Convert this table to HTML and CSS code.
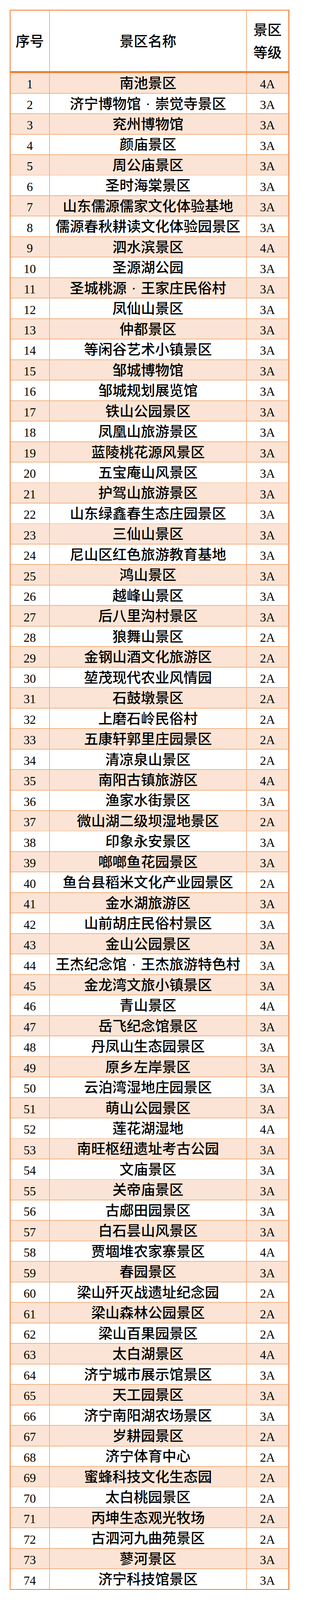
FILE: index.html
```html
<!DOCTYPE html>
<html lang="zh-CN">
<head>
<meta charset="utf-8">
<title>景区名录</title>
<link rel="stylesheet" href="styles.css">
</head>
<body>
<div class="sheet">
  <div class="table">
    <div class="row head">
      <div class="cell">序号</div>
      <div class="cell">景区名称</div>
      <div class="cell grade-head">景区<br>等级</div>
    </div>
    <div class="rule"></div>
    <div class="body">
      <div class="row"><div class="cell num">1</div><div class="cell name">南池景区</div><div class="cell grade">4A</div></div>
      <div class="row"><div class="cell num">2</div><div class="cell name">济宁博物馆<span class="dot">·</span>崇觉寺景区</div><div class="cell grade">3A</div></div>
      <div class="row"><div class="cell num">3</div><div class="cell name">兖州博物馆</div><div class="cell grade">3A</div></div>
      <div class="row"><div class="cell num">4</div><div class="cell name">颜庙景区</div><div class="cell grade">3A</div></div>
      <div class="row"><div class="cell num">5</div><div class="cell name">周公庙景区</div><div class="cell grade">3A</div></div>
      <div class="row"><div class="cell num">6</div><div class="cell name">圣时海棠景区</div><div class="cell grade">3A</div></div>
      <div class="row"><div class="cell num">7</div><div class="cell name">山东儒源儒家文化体验基地</div><div class="cell grade">3A</div></div>
      <div class="row"><div class="cell num">8</div><div class="cell name">儒源春秋耕读文化体验园景区</div><div class="cell grade">3A</div></div>
      <div class="row"><div class="cell num">9</div><div class="cell name">泗水滨景区</div><div class="cell grade">4A</div></div>
      <div class="row"><div class="cell num">10</div><div class="cell name">圣源湖公园</div><div class="cell grade">3A</div></div>
      <div class="row"><div class="cell num">11</div><div class="cell name">圣城桃源<span class="dot">·</span>王家庄民俗村</div><div class="cell grade">3A</div></div>
      <div class="row"><div class="cell num">12</div><div class="cell name">凤仙山景区</div><div class="cell grade">3A</div></div>
      <div class="row"><div class="cell num">13</div><div class="cell name">仲都景区</div><div class="cell grade">3A</div></div>
      <div class="row"><div class="cell num">14</div><div class="cell name">等闲谷艺术小镇景区</div><div class="cell grade">3A</div></div>
      <div class="row"><div class="cell num">15</div><div class="cell name">邹城博物馆</div><div class="cell grade">3A</div></div>
      <div class="row"><div class="cell num">16</div><div class="cell name">邹城规划展览馆</div><div class="cell grade">3A</div></div>
      <div class="row"><div class="cell num">17</div><div class="cell name">铁山公园景区</div><div class="cell grade">3A</div></div>
      <div class="row"><div class="cell num">18</div><div class="cell name">凤凰山旅游景区</div><div class="cell grade">3A</div></div>
      <div class="row"><div class="cell num">19</div><div class="cell name">蓝陵桃花源风景区</div><div class="cell grade">3A</div></div>
      <div class="row"><div class="cell num">20</div><div class="cell name">五宝庵山风景区</div><div class="cell grade">3A</div></div>
      <div class="row"><div class="cell num">21</div><div class="cell name">护驾山旅游景区</div><div class="cell grade">3A</div></div>
      <div class="row"><div class="cell num">22</div><div class="cell name">山东绿鑫春生态庄园景区</div><div class="cell grade">3A</div></div>
      <div class="row"><div class="cell num">23</div><div class="cell name">三仙山景区</div><div class="cell grade">3A</div></div>
      <div class="row"><div class="cell num">24</div><div class="cell name">尼山区红色旅游教育基地</div><div class="cell grade">3A</div></div>
      <div class="row"><div class="cell num">25</div><div class="cell name">鸿山景区</div><div class="cell grade">3A</div></div>
      <div class="row"><div class="cell num">26</div><div class="cell name">越峰山景区</div><div class="cell grade">3A</div></div>
      <div class="row"><div class="cell num">27</div><div class="cell name">后八里沟村景区</div><div class="cell grade">3A</div></div>
      <div class="row"><div class="cell num">28</div><div class="cell name">狼舞山景区</div><div class="cell grade">2A</div></div>
      <div class="row"><div class="cell num">29</div><div class="cell name">金钢山酒文化旅游区</div><div class="cell grade">2A</div></div>
      <div class="row"><div class="cell num">30</div><div class="cell name">堃茂现代农业风情园</div><div class="cell grade">2A</div></div>
      <div class="row"><div class="cell num">31</div><div class="cell name">石鼓墩景区</div><div class="cell grade">2A</div></div>
      <div class="row"><div class="cell num">32</div><div class="cell name">上磨石岭民俗村</div><div class="cell grade">2A</div></div>
      <div class="row"><div class="cell num">33</div><div class="cell name">五康轩郭里庄园景区</div><div class="cell grade">2A</div></div>
      <div class="row"><div class="cell num">34</div><div class="cell name">清凉泉山景区</div><div class="cell grade">2A</div></div>
      <div class="row"><div class="cell num">35</div><div class="cell name">南阳古镇旅游区</div><div class="cell grade">4A</div></div>
      <div class="row"><div class="cell num">36</div><div class="cell name">渔家水街景区</div><div class="cell grade">3A</div></div>
      <div class="row"><div class="cell num">37</div><div class="cell name">微山湖二级坝湿地景区</div><div class="cell grade">2A</div></div>
      <div class="row"><div class="cell num">38</div><div class="cell name">印象永安景区</div><div class="cell grade">3A</div></div>
      <div class="row"><div class="cell num">39</div><div class="cell name">啷啷鱼花园景区</div><div class="cell grade">3A</div></div>
      <div class="row"><div class="cell num">40</div><div class="cell name">鱼台县稻米文化产业园景区</div><div class="cell grade">2A</div></div>
      <div class="row"><div class="cell num">41</div><div class="cell name">金水湖旅游区</div><div class="cell grade">3A</div></div>
      <div class="row"><div class="cell num">42</div><div class="cell name">山前胡庄民俗村景区</div><div class="cell grade">3A</div></div>
      <div class="row"><div class="cell num">43</div><div class="cell name">金山公园景区</div><div class="cell grade">3A</div></div>
      <div class="row"><div class="cell num">44</div><div class="cell name">王杰纪念馆<span class="dot">·</span>王杰旅游特色村</div><div class="cell grade">3A</div></div>
      <div class="row"><div class="cell num">45</div><div class="cell name">金龙湾文旅小镇景区</div><div class="cell grade">3A</div></div>
      <div class="row"><div class="cell num">46</div><div class="cell name">青山景区</div><div class="cell grade">4A</div></div>
      <div class="row"><div class="cell num">47</div><div class="cell name">岳飞纪念馆景区</div><div class="cell grade">3A</div></div>
      <div class="row"><div class="cell num">48</div><div class="cell name">丹凤山生态园景区</div><div class="cell grade">3A</div></div>
      <div class="row"><div class="cell num">49</div><div class="cell name">原乡左岸景区</div><div class="cell grade">3A</div></div>
      <div class="row"><div class="cell num">50</div><div class="cell name">云泊湾湿地庄园景区</div><div class="cell grade">3A</div></div>
      <div class="row"><div class="cell num">51</div><div class="cell name">萌山公园景区</div><div class="cell grade">3A</div></div>
      <div class="row"><div class="cell num">52</div><div class="cell name">莲花湖湿地</div><div class="cell grade">4A</div></div>
      <div class="row"><div class="cell num">53</div><div class="cell name">南旺枢纽遗址考古公园</div><div class="cell grade">3A</div></div>
      <div class="row"><div class="cell num">54</div><div class="cell name">文庙景区</div><div class="cell grade">3A</div></div>
      <div class="row"><div class="cell num">55</div><div class="cell name">关帝庙景区</div><div class="cell grade">3A</div></div>
      <div class="row"><div class="cell num">56</div><div class="cell name">古郕田园景区</div><div class="cell grade">3A</div></div>
      <div class="row"><div class="cell num">57</div><div class="cell name">白石昙山风景区</div><div class="cell grade">3A</div></div>
      <div class="row"><div class="cell num">58</div><div class="cell name">贾堌堆农家寨景区</div><div class="cell grade">4A</div></div>
      <div class="row"><div class="cell num">59</div><div class="cell name">春园景区</div><div class="cell grade">3A</div></div>
      <div class="row"><div class="cell num">60</div><div class="cell name">梁山歼灭战遗址纪念园</div><div class="cell grade">2A</div></div>
      <div class="row"><div class="cell num">61</div><div class="cell name">梁山森林公园景区</div><div class="cell grade">2A</div></div>
      <div class="row"><div class="cell num">62</div><div class="cell name">梁山百果园景区</div><div class="cell grade">2A</div></div>
      <div class="row"><div class="cell num">63</div><div class="cell name">太白湖景区</div><div class="cell grade">4A</div></div>
      <div class="row"><div class="cell num">64</div><div class="cell name">济宁城市展示馆景区</div><div class="cell grade">3A</div></div>
      <div class="row"><div class="cell num">65</div><div class="cell name">天工园景区</div><div class="cell grade">3A</div></div>
      <div class="row"><div class="cell num">66</div><div class="cell name">济宁南阳湖农场景区</div><div class="cell grade">3A</div></div>
      <div class="row"><div class="cell num">67</div><div class="cell name">岁耕园景区</div><div class="cell grade">2A</div></div>
      <div class="row"><div class="cell num">68</div><div class="cell name">济宁体育中心</div><div class="cell grade">2A</div></div>
      <div class="row"><div class="cell num">69</div><div class="cell name">蜜蜂科技文化生态园</div><div class="cell grade">2A</div></div>
      <div class="row"><div class="cell num">70</div><div class="cell name">太白桃园景区</div><div class="cell grade">2A</div></div>
      <div class="row"><div class="cell num">71</div><div class="cell name">丙坤生态观光牧场</div><div class="cell grade">2A</div></div>
      <div class="row"><div class="cell num">72</div><div class="cell name">古泗河九曲苑景区</div><div class="cell grade">2A</div></div>
      <div class="row"><div class="cell num">73</div><div class="cell name">蓼河景区</div><div class="cell grade">3A</div></div>
      <div class="row"><div class="cell num">74</div><div class="cell name">济宁科技馆景区</div><div class="cell grade">3A</div></div>
    </div>
  </div>
</div>
</body>
</html>
```

FILE: styles.css
```css
html, body {
  margin: 0;
  padding: 0;
  background: #ffffff;
}

.sheet {
  zoom: 0.9592;
  padding: 26px 0 0 26px;
  width: 800px;
  box-sizing: border-box;
}

.table {
  width: 748px;
  box-sizing: border-box;
  border: 3px solid #ed7d31;
  font-family: "Liberation Serif", "Noto Sans CJK SC", serif;
  color: #000000;
  background: #f4b183;
}

.row {
  display: grid;
  grid-template-columns: 103px 525px 110px;
  column-gap: 2px;
  height: 52.72px;
  background: #f4b183;
}

.row.head {
  height: 162px;
}

.rule {
  height: 5px;
  background: #ed7d31;
}

.body {
  display: flex;
  flex-direction: column;
  row-gap: 2px;
  background: #f4b183;
}

.cell {
  display: flex;
  align-items: center;
  justify-content: center;
  text-align: center;
  background: #ffffff;
  white-space: nowrap;
  overflow: hidden;
}

.body .row:nth-child(odd) .cell {
  background: #fbe4d5;
}

.head .cell {
  font-size: 38px;
  font-weight: 500;
  line-height: 60px;
  padding-top: 7px;
}

.num, .grade {
  font-size: 33px;
  line-height: 1;
  padding-top: 8px;
}

.name {
  font-size: 38px;
  font-weight: 500;
  line-height: 1;
  padding-top: 4px;
}

.dot {
  display: inline-block;
  width: 1em;
  text-align: center;
}
```
